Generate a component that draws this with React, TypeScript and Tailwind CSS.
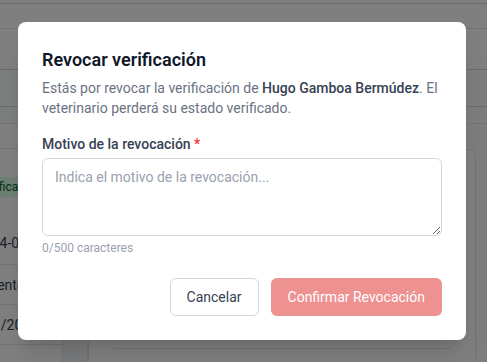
import { useState } from "react"

const MAX = 500

const BackgroundPage = () => (
  <div className="flex h-full flex-col bg-gray-50 text-sm text-gray-700">
    <div className="h-[4px] border-b border-gray-300 bg-white" />
    <div className="h-[25px] border-b border-gray-200 bg-white" />
    <div className="h-[41px] border-b border-gray-300 bg-white" />
    <div className="h-[37px] border-b border-gray-300" />
    <div className="h-[17px] border-b border-gray-200" />
    <div className="flex flex-1">
      <div className="flex w-[63px] flex-col overflow-hidden whitespace-nowrap border-r border-gray-200 bg-white">
        <div className="h-[25px] border-b border-gray-200" />
        <div className="flex h-[73px] items-start pt-[28px]">
          <span className="-ml-[30px] rounded bg-green-100 px-2 py-0.5 text-xs text-green-800">
            Verificado
          </span>
        </div>
        <div className="flex h-[43px] items-center border-b border-gray-200">
          <span className="-ml-[24px]">2024-01-15</span>
        </div>
        <div className="flex h-[40px] items-center border-b border-gray-200">
          <span className="-ml-[38px]">Pendiente</span>
        </div>
        <div className="flex h-[40px] items-center border-b border-gray-200">
          <span className="-ml-[15px]">01/2024</span>
        </div>
      </div>
      <div className="w-[25px] border-r border-gray-200 bg-gray-100" />
      <div className="flex-1 pr-[11px] pt-[25px]">
        <div className="h-full rounded-t-lg border border-b-0 border-gray-200 bg-white">
          <div className="mx-6 mt-[198px] border-t border-gray-200" />
        </div>
      </div>
    </div>
  </div>
)

const RevokeModal = () => {
  const [reason, setReason] = useState("")

  return (
    <div className="w-full max-w-md rounded-lg bg-white p-6 shadow-xl">
      <h2 className="text-lg font-semibold text-gray-900">Revocar verificación</h2>
      <p className="mt-1 text-sm text-gray-500">
        Estás por revocar la verificación de{" "}
        <span className="font-medium text-gray-700">Hugo Gamboa Bermúdez</span>. El
        veterinario perderá su estado verificado.
      </p>

      <label htmlFor="reason" className="mt-4 mb-1 block text-sm font-medium text-gray-700">
        Motivo de la revocación <span className="text-red-500">*</span>
      </label>
      <textarea
        id="reason"
        rows={3}
        maxLength={MAX}
        value={reason}
        onChange={(e) => setReason(e.target.value)}
        placeholder="Indica el motivo de la revocación..."
        className="block w-full rounded-md border border-gray-300 px-3 py-2 text-sm text-gray-900 placeholder:text-gray-400 focus:outline-none"
      />
      <p className="mt-1 text-xs text-gray-400">
        {reason.length}/{MAX} caracteres
      </p>

      <div className="mt-[22px] flex justify-end gap-3">
        <button
          type="button"
          className="rounded-md border border-gray-300 bg-white px-4 py-2 text-sm text-gray-700"
        >
          Cancelar
        </button>
        <button
          type="button"
          disabled={reason.trim().length === 0}
          className="rounded-md border border-transparent bg-[#dc2626] px-4 py-2 text-sm text-white disabled:opacity-50"
        >
          Confirmar Revocación
        </button>
      </div>
    </div>
  )
}

export default function App() {
  return (
    <div
      className="relative h-[362px] w-[487px] overflow-hidden"
      style={{ fontFamily: 'Roboto, "Noto Sans", sans-serif' }}
    >
      <BackgroundPage />
      <div className="absolute inset-0 flex items-start justify-center bg-black/50 pr-[3px] pt-[22px]">
        <RevokeModal />
      </div>
    </div>
  )
}
